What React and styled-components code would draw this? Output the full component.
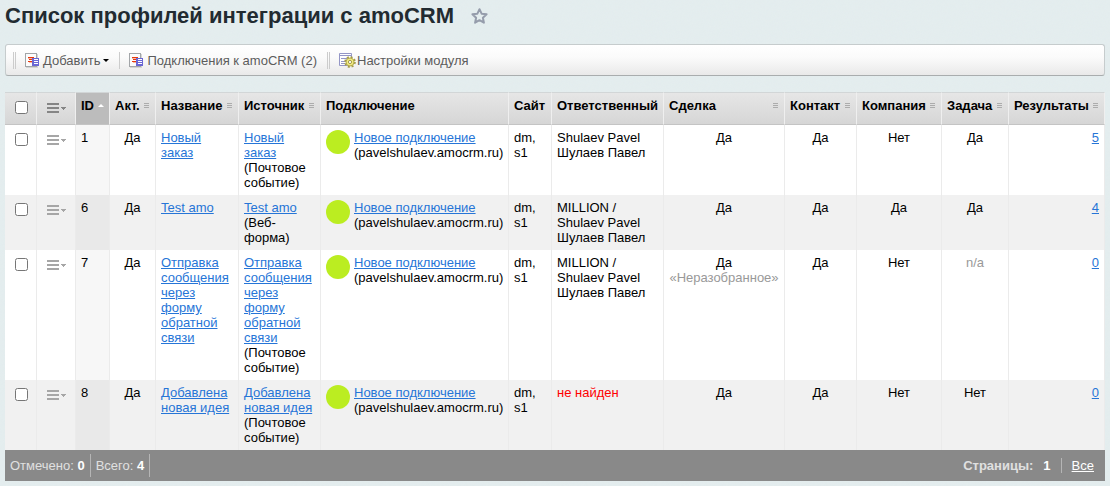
import { createGlobalStyle, styled } from "styled-components";

const columns = [
    { id: "check", width: 32 },
    { id: "menu", width: 39 },
    { id: "id", title: "ID", width: 34, sorted: true },
    { id: "active", title: "Акт.", width: 46, sortable: true },
    { id: "name", title: "Название", width: 83, sortable: true },
    { id: "source", title: "Источник", width: 82, sortable: true },
    { id: "connection", title: "Подключение", width: 188 },
    { id: "site", title: "Сайт", width: 43 },
    { id: "responsible", title: "Ответственный", width: 112 },
    { id: "deal", title: "Сделка", width: 121, sortable: true },
    { id: "contact", title: "Контакт", width: 72, sortable: true },
    { id: "company", title: "Компания", width: 85, sortable: true },
    { id: "task", title: "Задача", width: 67, sortable: true },
    { id: "results", title: "Результаты", width: 96, sortable: true },
];

const profiles = [
    {
        id: 1,
        name: "Новый заказ",
        source: "(Почтовое событие)",
        responsible: ["Shulaev Pavel", "Шулаев Павел"],
        deal: "Да",
        company: "Нет",
        task: "Да",
        results: 5,
    },
    {
        id: 6,
        name: "Test amo",
        source: "(Веб-форма)",
        responsible: ["MILLION /", "Shulaev Pavel", "Шулаев Павел"],
        deal: "Да",
        company: "Да",
        task: "Да",
        results: 4,
    },
    {
        id: 7,
        name: "Отправка сообщения через форму обратной связи",
        source: "(Почтовое событие)",
        responsible: ["MILLION /", "Shulaev Pavel", "Шулаев Павел"],
        deal: "Да",
        dealNote: "«Неразобранное»",
        company: "Нет",
        results: 0,
    },
    {
        id: 8,
        name: "Добавлена новая идея",
        source: "(Почтовое событие)",
        deal: "Да",
        company: "Нет",
        task: "Нет",
        results: 0,
    },
];

function StarIcon() {
    return (
        <svg width="18" height="18" viewBox="0 0 18 18" aria-hidden="true">
            <path
                d="M9.5 2.2l2.1 4.5 5 .6-3.7 3.4 1 5-4.4-2.5-4.4 2.5 1-5-3.7-3.4 5-.6z"
                fill="none"
                stroke="#959cab"
                strokeWidth="2"
                strokeLinejoin="round"
            />
        </svg>
    );
}

function ListIcon() {
    return (
        <svg width="15" height="16" viewBox="0 0 15 16" shapeRendering="crispEdges" aria-hidden="true">
            <path d="M1 2h12v14H1z" fill="#d4d4d4" />
            <path d="M0 1h12v14H0z" fill="#a2a5a8" />
            <path d="M1 2h10v12H1z" fill="#fcfcfc" />
            <path d="M3 5h6v1H3z" fill="#e8380c" />
            <path d="M4 7h4v1H4z" fill="#e8380c" />
            <path d="M3 9h4v1H3z" fill="#e8380c" />
            <path d="M3 6h5v1H3zM4 10h3v1H4z" fill="#f6b9a6" />
            <path d="M7 6h7v8H7z" fill="#6a66d4" />
            <path d="M9 7h4v1H9zM9 9h4v1H9zM9 11h4v1H9z" fill="#ffffff" />
        </svg>
    );
}

function SettingsIcon() {
    return (
        <svg width="18" height="16" viewBox="0 0 18 16" aria-hidden="true">
            <path d="M.5 1.5h12v12H.5z" fill="#ffffff" stroke="#9496c6" />
            <path d="M1 3.5h11M2 6.5h9M2 9.5h5M2 11.5h4" stroke="#9496c6" />
            <circle cx="11" cy="10" r="4.8" fill="none" stroke="#a39b4a" strokeWidth="2" strokeDasharray="2 1.77" />
            <circle cx="11" cy="10" r="4" fill="#f1ea80" stroke="#b5ac4c" />
            <circle cx="11" cy="10" r="1.6" fill="#ffffff" stroke="#a39b4a" />
        </svg>
    );
}

function MenuIcon({ color }) {
    return (
        <svg width="20" height="12" viewBox="0 0 20 12" shapeRendering="crispEdges" aria-hidden="true">
            <path d="M0 1h12v2H0zM0 5h12v2H0zM0 9h12v2H0z" fill={color} />
            <path d="M14 5h5v1h-1v1h-1v1h-1V7h-1V6h-1z" fill={color} />
        </svg>
    );
}

export default function App() {
    return (
        <>
            <GlobalStyle />
            <Page>
                <Header>
                    <h1>Список профилей интеграции с amoCRM</h1>
                    <StarButton aria-label="Добавить в избранное">
                        <StarIcon />
                    </StarButton>
                </Header>

                <Toolbar>
                    <Grip />
                    <ToolButton>
                        <ListIcon />
                        Добавить
                        <Caret />
                    </ToolButton>
                    <Separator />
                    <ToolLink href="#connections">
                        <ListIcon />
                        Подключения к amoCRM (2)
                    </ToolLink>
                    <Grip />
                    <ToolLink href="#settings" $tight>
                        <SettingsIcon />
                        Настройки модуля
                    </ToolLink>
                </Toolbar>

                <Table>
                    <colgroup>
                        {columns.map((col) => (
                            <Col key={col.id} $width={col.width} />
                        ))}
                    </colgroup>
                    <thead>
                        <tr>
                            <HeadCell>
                                <Checkbox type="checkbox" aria-label="Отметить все" />
                            </HeadCell>
                            <HeadCell>
                                <MenuButton aria-label="Настройка списка">
                                    <MenuIcon color="#858585" />
                                </MenuButton>
                            </HeadCell>
                            {columns.slice(2).map((col) => (
                                <HeadCell key={col.id} $sorted={col.sorted}>
                                    <HeadLabel>
                                        {col.title}
                                        {col.sorted && <SortUp />}
                                        {col.sortable && <SortMark />}
                                    </HeadLabel>
                                </HeadCell>
                            ))}
                        </tr>
                    </thead>
                    <tbody>
                        {profiles.map((item) => (
                            <Row key={item.id}>
                                <Cell>
                                    <Checkbox type="checkbox" aria-label={`Отметить ${item.id}`} />
                                </Cell>
                                <Cell>
                                    <MenuButton aria-label={`Действия ${item.id}`}>
                                        <MenuIcon color="#a6a6a6" />
                                    </MenuButton>
                                </Cell>
                                <Cell $sorted>{item.id}</Cell>
                                <Cell $align="center">Да</Cell>
                                <Cell>
                                    <Link href="#profile">{item.name}</Link>
                                </Cell>
                                <Cell>
                                    <Link href="#source">{item.name}</Link> {item.source}
                                </Cell>
                                <Cell>
                                    <Connection>
                                        <Status />
                                        <div>
                                            <Link href="#connection">Новое подключение</Link>
                                            <br />
                                            (pavelshulaev.amocrm.ru)
                                        </div>
                                    </Connection>
                                </Cell>
                                <Cell>dm, s1</Cell>
                                <Cell>
                                    {item.responsible ? (
                                        item.responsible.map((line) => <div key={line}>{line}</div>)
                                    ) : (
                                        <Missing>не найден</Missing>
                                    )}
                                </Cell>
                                <Cell $align="center">
                                    {item.deal}
                                    {item.dealNote && <Muted as="div">{item.dealNote}</Muted>}
                                </Cell>
                                <Cell $align="center">Да</Cell>
                                <Cell $align="center">{item.company}</Cell>
                                <Cell $align="center">{item.task || <Muted>n/a</Muted>}</Cell>
                                <Cell $align="right">
                                    <Link href="#results">{item.results}</Link>
                                </Cell>
                            </Row>
                        ))}
                    </tbody>
                </Table>

                <Footer>
                    <Counter>
                        Отмечено: <b>0</b>
                    </Counter>
                    <Counter>
                        Всего: <b>4</b>
                    </Counter>
                    <Pages>
                        <PagesTitle>Страницы:</PagesTitle>
                        <b>1</b>
                        <AllPages href="#all">Все</AllPages>
                    </Pages>
                </Footer>
            </Page>
        </>
    );
}

// faint paper grain over the page colour
const grain = encodeURIComponent(
    `<svg xmlns="http://www.w3.org/2000/svg" width="120" height="120">
        <filter id="n" x="0" y="0" width="100%" height="100%">
            <feTurbulence type="fractalNoise" baseFrequency="0.35" numOctaves="2" stitchTiles="stitch"/>
            <feColorMatrix values="0 0 0 0 0.76  0 0 0 0 0.84  0 0 0 0 0.86  0.6 0 0 0 -0.1"/>
        </filter>
        <rect width="120" height="120" filter="url(#n)"/>
    </svg>`
);

const GlobalStyle = createGlobalStyle`
    * {
        box-sizing: border-box;
    }

    body {
        margin: 0;
        background: #e4edee url("data:image/svg+xml,${grain}");
        color: #000;
        font-family: "Liberation Sans", Arial, sans-serif;
        font-size: 13px;
        line-height: 15px;
    }

    button {
        border: 0;
        padding: 0;
        background: none;
        font: inherit;
        color: inherit;
        cursor: pointer;
    }
`;

const Page = styled.main`
    padding: 0 5px 5px;
`;

const Header = styled.header`
    display: flex;
    align-items: center;
    gap: 16px;
    height: 32px;

    h1 {
        margin: 0;
        font-size: 22px;
        line-height: 28px;
        color: #222b31;
    }
`;

const StarButton = styled.button`
    display: flex;
`;

const Toolbar = styled.div`
    display: flex;
    align-items: center;
    height: 32px;
    margin: 12px 0 16px;
    padding: 0 7px;
    border: 1px solid #c6cccd;
    border-bottom-color: #a9adae;
    border-radius: 3px;
    background: linear-gradient(#ffffff, #fbfbfb 40%, #e9e9e9);
    color: #5c5c5c;
`;

const Grip = styled.span`
    width: 3px;
    height: 17px;
    border: solid #cccccc;
    border-width: 0 1px;
`;

const Separator = styled.span`
    width: 1px;
    height: 17px;
    background: #cccccc;
`;

const ToolButton = styled.button`
    display: flex;
    align-items: center;
    gap: 3px;
    padding: 0 10px 0 9px;
`;

const ToolLink = styled.a`
    display: flex;
    align-items: center;
    gap: ${({ $tight }) => ($tight ? 0 : 3)}px;
    padding: 0 10px 0 9px;
    color: inherit;
    text-decoration: none;
`;

const Caret = styled.span`
    border: solid transparent;
    border-width: 3px 3px 0;
    border-top-color: #000;
`;

const Table = styled.table`
    width: 100%;
    table-layout: fixed;
    border-collapse: separate;
    border-spacing: 0;
    background: #ffffff;
`;

const Col = styled.col`
    width: ${({ $width }) => $width}px;
`;

const HeadCell = styled.th`
    height: 33px;
    padding: 5px 3px 6px 5px;
    border: solid #c4c4c4;
    border-width: 1px 0;
    border-top-color: #d2d6d7;
    border-right: 1px solid #efefef;
    background: ${({ $sorted }) => ($sorted ? "#bcbcbc" : "linear-gradient(#e6e6e6, #d6d6d6)")};
    text-align: left;
    vertical-align: top;
`;

const HeadLabel = styled.div`
    display: flex;
    align-items: center;
    justify-content: space-between;
    white-space: nowrap;
`;

const SortMark = styled.span`
    width: 5px;
    height: 5px;
    margin-right: 3px;
    border: solid #acacac;
    border-width: 1px 0;
    background: linear-gradient(#acacac, #acacac) center / 100% 1px no-repeat;
`;

const SortUp = styled.span`
    margin-right: 2px;
    border: solid transparent;
    border-width: 0 3px 3px;
    border-bottom-color: #ffffff;
`;

const Row = styled.tr`
    background: #ffffff;

    &:nth-child(even) {
        background: #f1f1f1;
    }
`;

const Cell = styled.td`
    padding: 5px;
    border-right: 1px solid #ebebeb;
    background: ${({ $sorted }) => ($sorted ? "rgba(0, 0, 0, 0.03)" : "none")};
    text-align: ${({ $align }) => $align || "left"};
    vertical-align: top;
`;

const Checkbox = styled.input`
    display: block;
    width: 13px;
    height: 13px;
    margin: 3px 0 0 5px;
`;

const MenuButton = styled.button`
    display: flex;
    margin: 4px 0 0 5px;
`;

const Link = styled.a`
    color: #2675d7;
`;

const Connection = styled.div`
    display: flex;
    gap: 4px;
`;

const Status = styled.span`
    flex: none;
    width: 24px;
    height: 24px;
    border-radius: 50%;
    background: #bbed21;
`;

const Missing = styled.span`
    color: #ff0000;
`;

const Muted = styled.span`
    color: #999999;
`;

const Footer = styled.footer`
    display: flex;
    align-items: center;
    height: 31px;
    background: #898989;
    color: #e0e0e0;

    b {
        color: #ffffff;
    }
`;

const Counter = styled.span`
    padding: 4px 5px;
    border-right: 1px solid #b5b5b5;
`;

const Pages = styled.nav`
    display: flex;
    align-items: center;
    margin-left: auto;
    padding-right: 11px;
`;

const PagesTitle = styled.span`
    margin-right: 10px;
    font-weight: bold;
`;

const AllPages = styled.a`
    margin-left: 10px;
    padding-left: 10px;
    border-left: 1px solid #b5b5b5;
    color: #ffffff;
`;
